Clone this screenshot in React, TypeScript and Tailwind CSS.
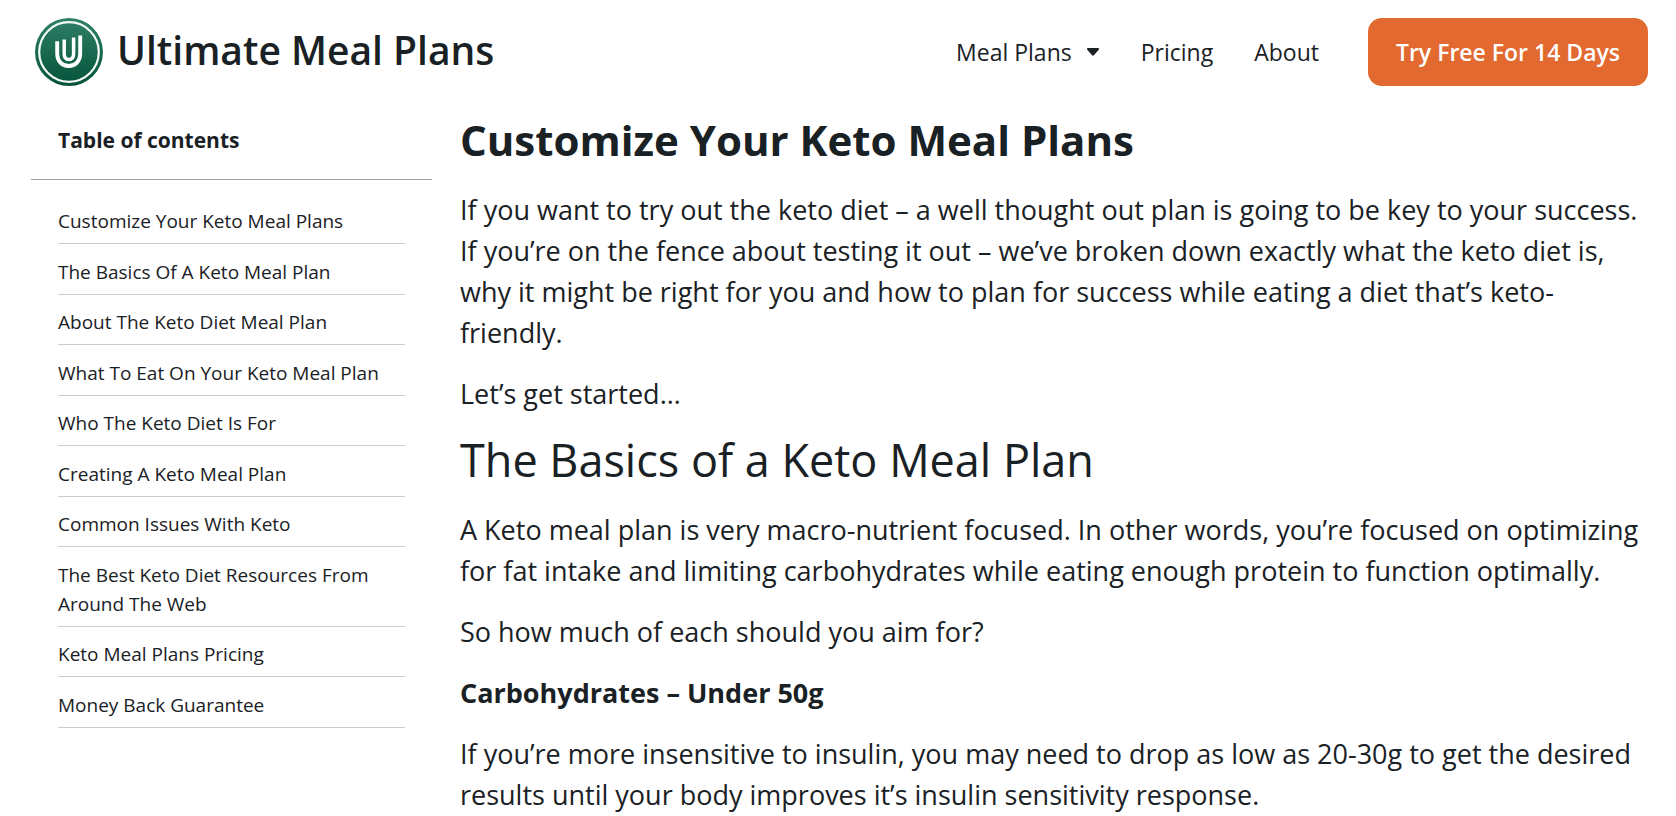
const contents = [
  "Customize Your Keto Meal Plans",
  "The Basics Of A Keto Meal Plan",
  "About The Keto Diet Meal Plan",
  "What To Eat On Your Keto Meal Plan",
  "Who The Keto Diet Is For",
  "Creating A Keto Meal Plan",
  "Common Issues With Keto",
  "The Best Keto Diet Resources From Around The Web",
  "Keto Meal Plans Pricing",
  "Money Back Guarantee",
];

function Logo() {
  return (
    <svg viewBox="0 0 68 68" className="size-17 shrink-0" aria-hidden="true">
      <defs>
        <linearGradient id="badge" x1="0" y1="0" x2="0" y2="1">
          <stop offset="0" stopColor="#2f8068" />
          <stop offset="1" stopColor="#045239" />
        </linearGradient>
      </defs>
      <circle cx="34" cy="34" r="34" fill="url(#badge)" />
      <circle cx="34" cy="34" r="29.8" fill="none" stroke="#f4faf7" strokeWidth="2.2" />
      <g fill="none" stroke="#fff">
        <path d="M22.2 23.2V35.5C22.2 43.2 27 48 33.7 48S45.2 43.2 45.2 35.5V17.6" strokeWidth="3.9" />
        <path d="M29.2 21.6V36C29.2 39.6 31 41.4 33.9 41.4S38.6 39.6 38.6 36V19.4" strokeWidth="3.5" />
      </g>
    </svg>
  );
}

function Header() {
  return (
    <header className="flex items-center justify-between pt-[18px] pr-7 pl-[35px]">
      <a href="#" className="flex items-center gap-3.5">
        <Logo />
        <span className="pb-1 text-[39px] leading-[48px] font-semibold">Ultimate Meal Plans</span>
      </a>
      <nav className="flex items-center gap-[41px] text-[23px] leading-8">
        <button type="button" className="flex items-center gap-3.5">
          Meal Plans
          <svg viewBox="0 0 14 9" className="h-2 w-3.5" aria-hidden="true">
            <path d="M1.5 0H12.5C13.8 0 14.3 1 13.5 2L8 8.2C7.4 8.9 6.6 8.9 6 8.2L.5 2C-.3 1 .2 0 1.5 0Z" fill="currentColor" />
          </svg>
        </button>
        <a href="#">Pricing</a>
        <a href="#">About</a>
        <a href="#" className="ml-2 rounded-[14px] bg-[#e2692f] px-7 py-[18px] font-semibold text-white">
          Try Free For 14 Days
        </a>
      </nav>
    </header>
  );
}

export default function App() {
  return (
    <div className="bg-white font-['Open_Sans',sans-serif] text-[#1a2125]">
      <Header />
      <div className="flex items-start">
        <aside className="ml-[31px] w-[401px] shrink-0">
          <h2 className="border-b border-[#9aa3ab] px-[27px] pt-10 pb-[25px] text-[21px] leading-7 font-bold">
            Table of contents
          </h2>
          <ul className="px-[27px] pt-3.5">
            {contents.map((item) => (
              <li key={item} className="border-b border-[#cccccc] pt-[13px] pb-[7px] even:pt-3.5">
                <a href="#" className="block text-[19px] leading-[29px]">{item}</a>
              </li>
            ))}
          </ul>
        </aside>
        <main className="ml-7 flex-1 pt-6 pr-6 text-[27px] leading-[41px]">
          <h1 className="mb-5 text-[42px] leading-[59px] font-bold">Customize Your Keto Meal Plans</h1>
          <p className="mb-5">
            If you want to try out the keto diet – a well thought out plan is going to be key to your success. If you’re
            on the fence about testing it out – we’ve broken down exactly what the keto diet is, why it might be right
            for you and how to plan for success while eating a diet that’s keto-friendly.
          </p>
          <p className="mb-4">Let’s get started…</p>
          <h2 className="mb-5 text-[45px] leading-[59px]">The Basics of a Keto Meal Plan</h2>
          <p className="mb-5">
            A Keto meal plan is very macro-nutrient focused. In other words, you’re focused on optimizing for fat intake
            and limiting carbohydrates while eating enough protein to function optimally.
          </p>
          <p className="mb-5">So how much of each should you aim for?</p>
          <p className="mb-5 font-bold">Carbohydrates – Under 50g</p>
          <p>
            If you’re more insensitive to insulin, you may need to drop as low as 20-30g to get the desired results
            until your body improves it’s insulin sensitivity response.
          </p>
        </main>
      </div>
    </div>
  );
}
